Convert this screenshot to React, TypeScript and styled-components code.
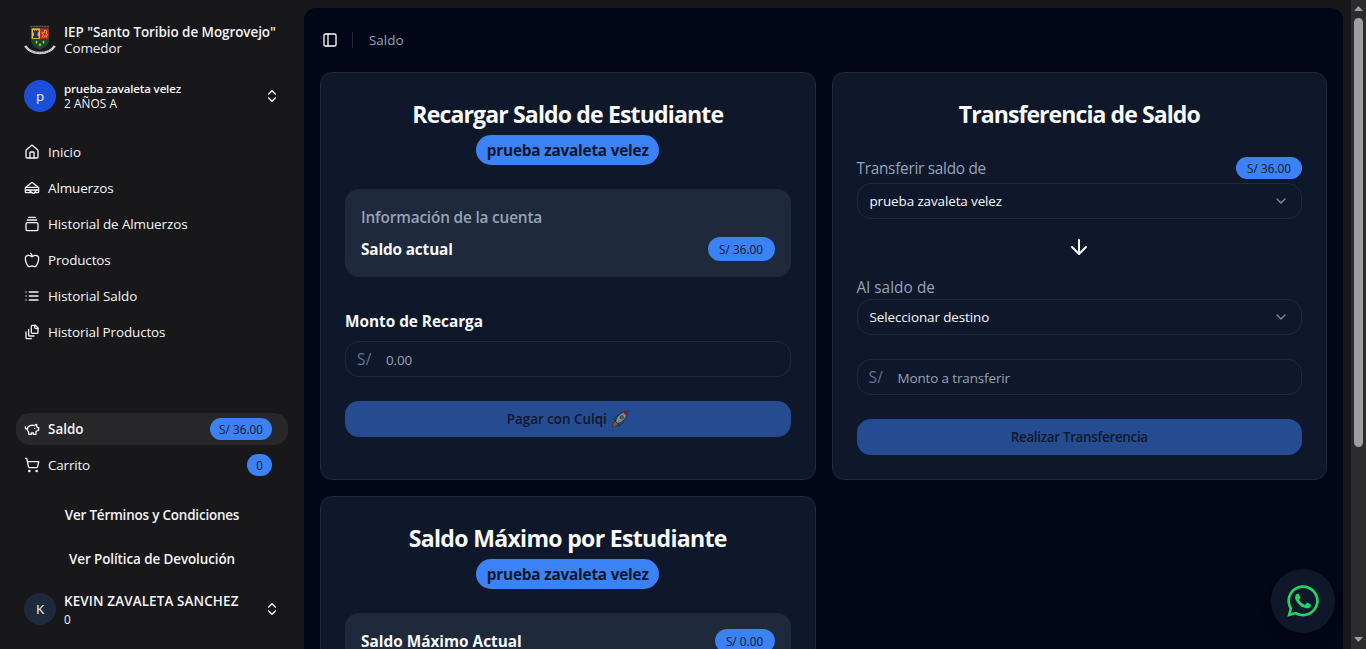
import React from "react";
import styled, { createGlobalStyle } from "styled-components";
import {
  ArrowDown,
  ChevronDown,
  ChevronsUpDown,
  GalleryVerticalEnd,
  House,
  PanelLeft,
  Sandwich,
  ShoppingCart,
} from "lucide-react";
import { FaWhatsapp } from "react-icons/fa";

const Global = createGlobalStyle`
  *, *::before, *::after { box-sizing: border-box; }
  html, body, #root { height: 100%; }
  body {
    margin: 0;
    overflow: hidden;
    background: #18181b;
    color: #f8fafc;
    font-family: "Open Sans", "Noto Sans", sans-serif;
  }
  button { font: inherit; border: 0; cursor: pointer; }
  svg { display: block; flex-shrink: 0; }
`;

/* ---------- text ---------- */

/* $drop nudges the baseline inside the line box without changing its height */
const Text = styled.span<{
  $size?: number;
  $weight?: number;
  $ls?: number;
  $line?: number;
  $drop?: number;
  $color?: string;
}>`
  display: block;
  margin: 0;
  padding-top: ${(p) => Math.max(0, (p.$drop ?? 0) * 2)}px;
  padding-bottom: ${(p) => Math.max(0, (p.$drop ?? 0) * -2)}px;
  font-size: ${(p) => (p.$size ?? 14) * 0.96}px;
  font-weight: ${(p) => p.$weight ?? 400};
  letter-spacing: ${(p) => p.$ls ?? 0}px;
  line-height: ${(p) => (p.$line ?? 20) - Math.abs((p.$drop ?? 0) * 2)}px;
  color: ${(p) => p.$color ?? "inherit"};
  white-space: nowrap;
`;

/* ---------- shell ---------- */

const Shell = styled.div`
  display: flex;
  height: 649px;
  overflow: hidden;
`;

const Sidebar = styled.aside`
  width: 304px;
  flex-shrink: 0;
  display: flex;
  flex-direction: column;
  padding: 16px;
  color: #f4f4f5;
`;

const SchoolRow = styled.div`
  display: flex;
  align-items: center;
  gap: 8px;
  height: 48px;
  padding: 0 8px;
`;

const AccountRow = styled.div<{ $top?: number }>`
  display: flex;
  align-items: center;
  gap: 8px;
  height: 48px;
  margin-top: ${(p) => p.$top ?? 0}px;
  padding: 0 8px;
`;

const AccountText = styled.div`
  flex: 1;
`;

const Avatar = styled.div<{ $bg: string }>`
  display: grid;
  place-items: center;
  width: 32px;
  height: 32px;
  border-radius: 50%;
  background: ${(p) => p.$bg};
`;

const Nav = styled.nav<{ $top: number }>`
  display: flex;
  flex-direction: column;
  gap: 4px;
  margin-top: ${(p) => p.$top}px;
`;

const NavItem = styled.a<{ $active?: boolean }>`
  display: flex;
  align-items: center;
  gap: 8px;
  height: 32px;
  padding: 0 16px 0 8px;
  border-radius: 14px;
  background: ${(p) => (p.$active ? "#27272a" : "transparent")};
`;

const NavLabel = styled(Text)`
  flex: 1;
`;

const Links = styled.div`
  display: flex;
  flex-direction: column;
  align-items: center;
  gap: 24px;
  margin-top: 24px;
`;

/* ---------- main ---------- */

const Main = styled.main`
  width: 1039px;
  height: 660px;
  flex-shrink: 0;
  margin: 8px 8px 0 0;
  padding: 0 16px;
  border-radius: 12px;
  background: #020617;
`;

const TopBar = styled.header`
  display: flex;
  align-items: center;
  height: 64px;
  padding-left: 2px;
`;

const Divider = styled.i`
  width: 1px;
  height: 16px;
  margin: 0 16px 0 14px;
  background: #1e293b;
`;

const Cards = styled.div`
  display: grid;
  grid-template-columns: 1fr 1fr;
  gap: 16px;
`;

const Card = styled.section`
  display: flex;
  flex-direction: column;
  height: 408px;
  padding: 24px;
  border: 1px solid #1e293b;
  border-radius: 12px;
  background: #0f172a;
`;

const CardHead = styled.div`
  display: flex;
  flex-direction: column;
  align-items: center;
  gap: 2px;
`;

const Badge = styled.span<{ $w: number; $h?: number }>`
  display: grid;
  place-items: center;
  width: ${(p) => p.$w}px;
  height: ${(p) => p.$h ?? 22}px;
  border-radius: 999px;
  background: #3b82f6;
  color: #0f172a;
`;

const InfoBox = styled.div`
  display: flex;
  flex-direction: column;
  gap: 8px;
  margin-top: 24px;
  padding: 16px;
  border-radius: 14px;
  background: #1e293b;
`;

const Split = styled.div`
  display: flex;
  align-items: center;
  justify-content: space-between;
`;

const Field = styled.div<{ $top?: number }>`
  display: flex;
  align-items: center;
  height: 36px;
  margin-top: ${(p) => p.$top ?? 0}px;
  padding: 0 11px;
  border: 1px solid #1e293b;
  border-radius: 14px;
`;

const Select = styled(Field)`
  justify-content: space-between;
  padding: 0 12px;
  svg {
    opacity: 0.5;
  }
`;

const Prefix = styled(Text)`
  width: 29px;
`;

const Action = styled.button`
  display: flex;
  align-items: center;
  justify-content: center;
  gap: 4px;
  height: 36px;
  margin-top: 24px;
  border-radius: 14px;
  background: #3b82f6;
  color: #0f172a;
  opacity: 0.5;
`;

const Label = styled(Text)<{ $top: number; $bottom?: number }>`
  margin-top: ${(p) => p.$top}px;
  margin-bottom: ${(p) => p.$bottom ?? 0}px;
`;

const TransferRow = styled(Split)`
  height: 22px;
  margin: 24px 0 4px;
`;

const ArrowRow = styled.div`
  display: flex;
  justify-content: center;
  margin: 16px 0;
`;

const Chat = styled.button`
  position: fixed;
  right: 31px;
  bottom: 16px;
  display: grid;
  place-items: center;
  width: 64px;
  height: 64px;
  padding: 0;
  border-radius: 50%;
  background: #0f172a;
  color: #25d366;
  box-shadow: 0 10px 15px -3px rgba(0, 0, 0, 0.1);
`;

/* ---------- scroll bar ---------- */

const Track = styled.div`
  display: flex;
  flex-direction: column;
  align-items: center;
  justify-content: space-between;
  width: 15px;
  height: 649px;
  padding: 6px 0 7px;
  background: #2c2c2c;
`;

const Thumb = styled.div`
  width: 9px;
  height: 429px;
  margin: 7px 0 auto;
  border-radius: 5px;
  background: #9f9f9f;
`;

/* ---------- drawings ---------- */

const outline = (paths: string[]) => () => (
  <svg
    width="16"
    height="16"
    viewBox="0 0 24 24"
    fill="none"
    stroke="currentColor"
    strokeWidth="2"
    strokeLinecap="round"
    strokeLinejoin="round"
  >
    {paths.map((d) => (
      <path key={d} d={d} />
    ))}
  </svg>
);

const AppleIcon = outline([
  "M12 20.940c1.500 0 2.750 1.060 4 1.060 3 0 6-8 6-12.220A4.910 4.910 0 0 0 17 5c-2.220 0-4 1.440-5 2-1-.56-2.780-2-5-2a4.900 4.900 0 0 0-5 4.780C2 14 5 22 8 22c1.250 0 2.500-1.060 4-1.060Z",
  "M10 2c1 .5 2 2 2 5",
]);

const ListIcon = outline(["M3 6h.01", "M3 12h.01", "M3 18h.01", "M8 6h13", "M8 12h13", "M8 18h13"]);

const FileStackIcon = outline([
  "M21 7h-3a2 2 0 0 1-2-2V2",
  "M21 6v6.500c0 .8-.7 1.500-1.500 1.500h-7c-.8 0-1.500-.7-1.500-1.500v-9c0-.8.7-1.500 1.500-1.500H17Z",
  "M7 8v8.800c0 .3.2.6.4.8.2.2.5.4.8.4H15",
  "M3 12v8.800c0 .3.2.6.4.8.2.2.5.4.8.4H11",
]);

const PiggyIcon = outline([
  "M19 5c-1.500 0-2.800 1.400-3 2-3.500-1.500-11-.3-11 5 0 1.800 0 3 2 4.500V20h4v-2h3v2h4v-4c1-.5 1.700-1 2-2h2v-4h-2c0-1-.5-1.500-1-2V5z",
  "M2 9v1c0 1.100.9 2 2 2h1",
  "M16 11h.01",
]);

const Crest = () => (
  <svg width="32" height="32" viewBox="0 0 32 32">
    <path d="M6.500 2.500h19" stroke="#5d625e" strokeWidth="1.300" strokeDasharray="2.200 .5" />
    <path d="M6.800 4h18.400v11.500c0 5-4.400 8-9.200 10.200C11.200 23.500 6.800 20.500 6.800 15.500z" fill="#12492f" />
    <path d="M7.600 4.400H16v10.400H7.600z" fill="#f0bd2b" />
    <path d="M16 4.400h8.600v10.400H16z" fill="#cf1f27" />
    <path d="M9 6h1.400v1h.7V6h1.400v1h.7V6h1.400v2.500h-.9V12h.9v2H9v-2h.9V8.500H9z" fill="#1b2f68" />
    <path
      d="M18 13.500l1.500-3-1.800-1.500 1.300-.6 1 .6.4-2.600 2 .2.500 1.600-1.200.8 1.600 1.200-.8 3.300-1.500-2-1.400 2.200"
      fill="none"
      stroke="#e8963a"
      strokeWidth="1"
    />
    <path
      d="M12.500 16.800v3M11.400 18h2.200M19.500 16.800v3M18.400 18h2.200M16 19.200v3.400M14.800 20.700h2.400"
      stroke="#c9b23c"
      strokeWidth="1.200"
    />
    <path d="M1.200 21.800C4.500 27 9.500 29 16 29s11.500-2 14.800-7.200" fill="none" stroke="#d5d6d6" strokeWidth="2.400" />
    <path
      d="M3.500 24.500C7 27.700 11 29 16 29s9-1.300 12.500-4.500"
      fill="none"
      stroke="#85878a"
      strokeWidth=".8"
      strokeDasharray="1 .8"
    />
  </svg>
);

const Rocket = () => (
  <svg width="18" height="18" viewBox="0 0 18 18">
    <path d="M2.600 9.600L6.500 5.300l4 .4-3.600 5.300zM12.700 12l-4.300 4.300-.8-4 4.800-4.300z" fill="#12b4d8" stroke="#0b1020" strokeWidth=".6" />
    <path d="M4.300 11l3 2.900c-.9 2-3.300 2.800-6 3.200.2-2.600 1-5.100 3-6.100z" fill="#f5902a" stroke="#0b1020" strokeWidth=".5" />
    <path d="M4.600 11.400C5.400 6.700 9.500 1.900 17 1c-1 7.300-5.500 11.400-10.300 12.500z" fill="#f1f2f4" stroke="#0b1020" strokeWidth=".7" />
    <path d="M12 2.400c1.500-.7 3.200-1.200 5-1.400-.3 1.900-.8 3.600-1.500 5z" fill="#e81f45" />
    <circle cx="10.800" cy="7.300" r="1.700" fill="#8c98a8" stroke="#39424f" strokeWidth=".5" />
  </svg>
);

const ScrollArrow = ({ d }: { d: string }) => (
  <svg width="9" height="5" viewBox="0 0 9 5">
    <path d={d} fill="#9f9f9f" />
  </svg>
);

/* ---------- shared parts ---------- */

const Amount = ({ value, w, h }: { value: string; w: number; h?: number }) => (
  <Badge $w={w} $h={h}>
    <Text $size={12.2} $weight={500} $ls={0.05} $line={16}>
      {value}
    </Text>
  </Badge>
);

const CardTitle = ({ title, ls, student }: { title: string; ls: number; student?: boolean }) => (
  <CardHead>
    <Text as="h2" $size={24} $weight={700} $ls={ls} $line={36} $drop={-1}>
      {title}
    </Text>
    {student && (
      <Badge $w={183} $h={30}>
        <Text $size={16} $weight={700} $ls={-0.21} $line={24} $drop={1}>
          prueba zavaleta velez
        </Text>
      </Badge>
    )}
  </CardHead>
);

const menu = [
  { icon: <House size={16} />, label: "Inicio", ls: -0.05 },
  { icon: <Sandwich size={16} />, label: "Almuerzos", ls: -0.1 },
  { icon: <GalleryVerticalEnd size={16} />, label: "Historial de Almuerzos", ls: -0.09 },
  { icon: <AppleIcon />, label: "Productos", ls: -0.15 },
  { icon: <ListIcon />, label: "Historial Saldo", ls: -0.08 },
  { icon: <FileStackIcon />, label: "Historial Productos", ls: -0.12 },
];

export default function App() {
  return (
    <Shell>
      <Global />
      <Sidebar>
        <SchoolRow>
          <Crest />
          <div>
            <Text $weight={600} $ls={-0.05} $line={16}>
              IEP "Santo Toribio de Mogrovejo"
            </Text>
            <Text $ls={-0.05} $line={16}>
              Comedor
            </Text>
          </div>
        </SchoolRow>
        <AccountRow $top={8}>
          <Avatar $bg="#1d4ed8">
            <Text $line={32}>p</Text>
          </Avatar>
          <AccountText>
            <Text $size={12} $weight={600} $ls={-0.15} $line={15}>
              prueba zavaleta velez
            </Text>
            <Text $size={12.3} $ls={0.1} $line={15}>
              2 AÑOS A
            </Text>
          </AccountText>
          <ChevronsUpDown size={16} />
        </AccountRow>

        <Nav $top={16}>
          {menu.map(({ icon, label, ls }) => (
            <NavItem key={label}>
              {icon}
              <NavLabel $ls={ls}>{label}</NavLabel>
            </NavItem>
          ))}
        </Nav>

        <Nav $top={65}>
          <NavItem $active>
            <PiggyIcon />
            <NavLabel $weight={600}>Saldo</NavLabel>
            <Amount value="S/ 36.00" w={62} />
          </NavItem>
          <NavItem>
            <ShoppingCart size={16} />
            <NavLabel $ls={-0.17}>Carrito</NavLabel>
            <Amount value="0" w={25} />
          </NavItem>
        </Nav>

        <Links>
          <Text $weight={600} $ls={-0.19}>
            Ver Términos y Condiciones
          </Text>
          <Text $weight={600} $ls={-0.09}>
            Ver Política de Devolución
          </Text>
        </Links>

        <AccountRow $top={16}>
          <Avatar $bg="#1e293b">
            <Text $line={32}>K</Text>
          </Avatar>
          <AccountText>
            <Text $weight={600} $ls={0.12} $line={17}>
              KEVIN ZAVALETA SANCHEZ
            </Text>
            <Text $size={12.3} $line={16} $drop={1}>
              0
            </Text>
          </AccountText>
          <ChevronsUpDown size={16} />
        </AccountRow>
      </Sidebar>

      <Main>
        <TopBar>
          <PanelLeft size={16} />
          <Divider />
          <Text $color="#94a3b8">Saldo</Text>
        </TopBar>

        <Cards>
          <Card>
            <CardTitle title="Recargar Saldo de Estudiante" ls={-0.85} student />
            <InfoBox>
              <Text $size={16} $weight={600} $ls={-0.17} $line={24} $drop={1} $color="#94a3b8">
                Información de la cuenta
              </Text>
              <Split>
                <Text $size={16} $weight={700} $ls={-0.15} $line={24} $drop={1}>
                  Saldo actual
                </Text>
                <Amount value="S/ 36.00" w={67} h={24} />
              </Split>
            </InfoBox>
            <Label $size={16} $weight={700} $ls={-0.02} $line={24} $drop={1} $top={32} $bottom={8}>
              Monto de Recarga
            </Label>
            <Field>
              <Prefix $size={16} $ls={0.4} $drop={1} $color="#64748b">
                S/
              </Prefix>
              <Text $ls={-0.15} $drop={1} $color="#94a3b8">
                0.00
              </Text>
            </Field>
            <Action>
              <Text $weight={600} $ls={-0.03}>
                Pagar con Culqi
              </Text>
              <Rocket />
            </Action>
          </Card>

          <Card>
            <CardTitle title="Transferencia de Saldo" ls={-0.93} />
            <TransferRow>
              <Text $size={16} $ls={-0.27} $line={24} $drop={1} $color="#94a3b8">
                Transferir saldo de
              </Text>
              <Amount value="S/ 36.00" w={66} />
            </TransferRow>
            <Select>
              <Text $ls={-0.11}>prueba zavaleta velez</Text>
              <ChevronDown size={16} />
            </Select>
            <ArrowRow>
              <ArrowDown size={24} />
            </ArrowRow>
            <Label $size={16} $ls={0.05} $line={24} $drop={1} $top={0} $color="#94a3b8">
              Al saldo de
            </Label>
            <Select>
              <Text $ls={-0.1}>Seleccionar destino</Text>
              <ChevronDown size={16} />
            </Select>
            <Field $top={24}>
              <Prefix $size={16} $ls={0.4} $drop={1} $color="#64748b">
                S/
              </Prefix>
              <Text $ls={-0.12} $drop={1} $color="#94a3b8">
                Monto a transferir
              </Text>
            </Field>
            <Action>
              <Text $weight={600} $ls={-0.33}>
                Realizar Transferencia
              </Text>
            </Action>
          </Card>

          <Card>
            <CardTitle title="Saldo Máximo por Estudiante" ls={-0.68} student />
            <InfoBox>
              <Split>
                <Text $size={16} $weight={700} $line={24} $drop={1}>
                  Saldo Máximo Actual
                </Text>
                <Amount value="S/ 0.00" w={60} h={24} />
              </Split>
            </InfoBox>
          </Card>
        </Cards>
      </Main>

      <Track>
        <ScrollArrow d="M4.500 0L9 5H0z" />
        <Thumb />
        <ScrollArrow d="M0 0h9L4.500 5z" />
      </Track>

      <Chat aria-label="WhatsApp">
        <FaWhatsapp size={36} />
      </Chat>
    </Shell>
  );
}
